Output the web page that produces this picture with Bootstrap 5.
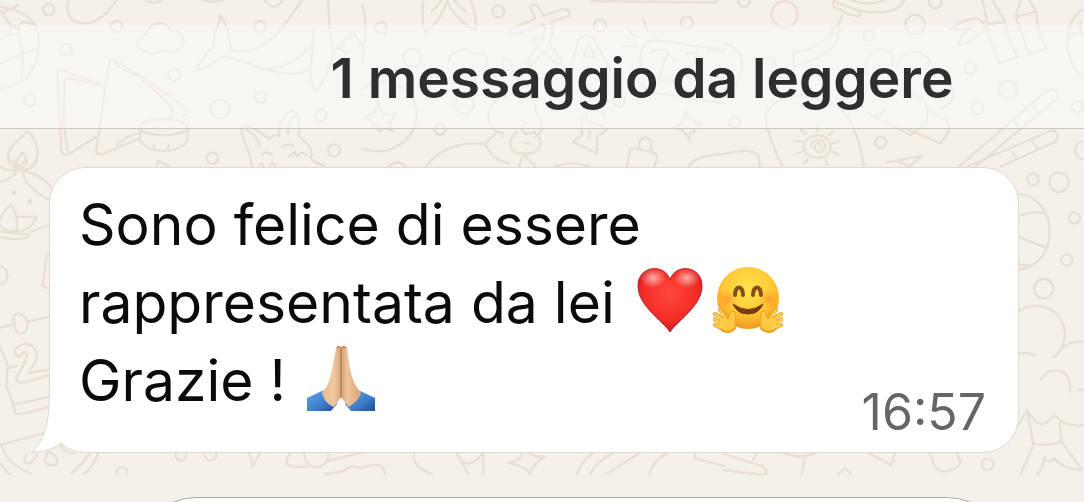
<!DOCTYPE html>
<html lang="it">
<head>
<meta charset="utf-8">
<meta name="viewport" content="width=device-width, initial-scale=1">
<title>Chat</title>
<link href="https://cdn.jsdelivr.net/npm/bootstrap@5.3.0/dist/css/bootstrap.min.css" rel="stylesheet">
<style>
  body { background: #f4f1ea; font-family: Inter, "Liberation Sans", sans-serif; color: #0b0b0b; }
  .chat { padding-top: 25px; }
  .wallpaper { position: absolute; top: 0; left: 0; z-index: 0; width: 100%; fill: none; stroke: #eadfd4; stroke-width: 7; stroke-linecap: round; stroke-linejoin: round; }
  .unread { background: rgba(252, 252, 251, .5); border-bottom: 1px solid #cbc7c1; padding: 3px 0 0 200px; font-size: 55px; line-height: 100px; font-weight: 600; color: #2f2e2c; }
  .bubble { background: #fff; border: 1px solid #dedad3; border-radius: 36px; margin: 38px 65px 44px 49px; padding: 18px 32px 16px 29px; }
  .message { font-size: 57px; line-height: 78px; margin: 0 0 16px; }
  .sent-at { font-size: 50px; line-height: 48px; color: #666; }
  .tail { position: absolute; left: -19px; bottom: -1px; }
  .emoji { width: 70px; height: 70px; vertical-align: -13px; margin: 0 4px; }
  .next-bubble { background: #fff; border: 1px solid #a9a9a7; border-radius: 60px; height: 120px; margin: 0 77px 0 136px; }
</style>
</head>
<body>
<main class="chat position-relative vh-100 overflow-hidden">
  <svg class="wallpaper" viewBox="0 0 1084 475" aria-hidden="true">
    <g transform="scale(.3333)">
      <circle cx="146" cy="29" r="17"/><circle cx="350" cy="80" r="17"/><circle cx="199" cy="148" r="17"/><circle cx="89" cy="301" r="17"/><circle cx="522" cy="224" r="18"/><circle cx="780" cy="80" r="17"/><circle cx="660" cy="327" r="29"/><circle cx="782" cy="292" r="17"/><circle cx="963" cy="346" r="17"/><circle cx="637" cy="475" r="17"/><circle cx="1002" cy="451" r="18"/>
      <path d="M205 0C195 45 215 70 255 70S325 35 350 0M440 0Q462 18 485 0M605 0Q637 10 670 0M795 0Q820 40 848 0"/>
      <path d="M0 20Q60 30 88 55Q118 85 117 130C117 210 70 262 0 265M15 35L55 15M0 30L35 80L50 85L70 65L108 75M28 90a14 14 0 1 0 28 0a14 14 0 1 0-28 0M55 105Q75 160 65 235M0 190L110 145M0 120Q20 100 28 104"/>
      <path d="M440 158C400 150 408 105 443 100C447 62 500 60 514 92C555 92 565 140 530 150C515 160 500 155 490 150C472 162 455 162 440 158Z"/>
      <path d="M905 0C860 70 800 170 700 152C680 145 700 95 660 46C660 85 630 110 643 142C610 155 612 185 586 206C625 215 640 180 672 170C740 180 780 215 870 222Q905 222 930 208M780 208C860 210 910 165 937 132M940 93C945 160 920 200 937 255Q948 285 962 255C985 215 1000 180 1000 155L1055 100M985 0Q985 70 997 140M1060 100L1086 135M1000 150Q1030 140 1040 165"/>
      <path d="M172 211L184 450Q188 470 205 463L290 410M172 211Q180 206 195 213L310 257L195 233L190 370L204 455M288 455L328 185Q333 172 350 182L435 238L555 320Q570 338 550 348M288 455Q293 466 308 462L420 415M345 190Q370 212 420 232L515 320Q525 335 510 350M350 435Q380 405 420 400"/>
      <path d="M420 380C420 350 563 350 563 380C563 415 420 415 420 380V415C430 465 550 465 563 415V380M462 435V449M505 435V449"/>
      <path d="M83 392C65 420 20 435 25 475Q30 505 70 510C125 505 125 435 83 392ZM66 458C55 475 45 480 50 495Q62 512 78 495Q85 475 66 458Z"/>
      <path d="M755 500C755 450 720 420 725 383Q730 375 760 387Q790 400 805 418Q825 400 838 408C835 370 860 330 880 333C905 345 895 380 897 410Q935 435 935 465Q920 480 975 498M740 390Q775 410 778 435M865 402Q860 370 883 350M785 465Q800 450 815 463M850 440Q865 430 880 437M868 470L885 455L890 470L905 458L920 465M775 495L785 490L790 500M810 495L820 488L827 500M470 500L475 482L505 498"/>
    </g>
    <g transform="translate(362) scale(.3333)">
      <circle cx="409" cy="34" r="18"/><circle cx="57" cy="84" r="18"/><circle cx="714" cy="77" r="18"/><circle cx="975" cy="68" r="18"/><circle cx="234" cy="388" r="17"/><circle cx="308" cy="313" r="28"/><circle cx="772" cy="302" r="17"/><circle cx="151" cy="173" r="27"/><circle cx="436" cy="195" r="15"/>
      <path d="M185 0Q175 50 190 98Q240 60 255 0Q270 50 340 92Q345 40 325 0M210 35L240 0M275 0L310 35M0 15Q20 55 0 190M688 3L1060 8L1065 0"/>
      <path d="M445 88L520 55L505 25Q505 10 525 15L545 47L605 27Q630 30 620 48L570 65Q575 100 560 130L595 175Q605 200 580 190L545 155L510 195Q490 200 500 175L525 140L510 120Q520 105 540 122Q550 95 545 73L455 104Q435 105 445 88Z"/>
      <path d="M630 190L650 120Q670 95 695 115L745 210M665 170L680 130L700 170ZM785 138L825 140M800 90L825 113M845 60L855 92M835 185Q835 120 880 120L1086 150M870 155Q900 140 920 160L905 190L890 240H950M975 160Q1015 150 1000 185Q1030 210 980 230M1035 155H1086M840 175L825 240L860 275L1086 310M935 180V182M935 215V217"/>
      <path d="M0 270C60 210 165 265 165 345C165 420 80 475 0 445M48 305L64 342L105 345L80 370L92 393L62 382Q55 405 45 380L10 350L38 340Z"/>
      <path d="M260 185C265 150 320 140 330 160C370 155 385 175 370 200M190 500C250 430 320 425 370 433L405 395C360 370 380 290 435 290C470 270 525 290 520 335C540 355 550 395 520 410M370 433Q390 480 440 490M405 395Q430 400 420 410M465 395C435 420 440 465 485 460C540 465 550 420 515 395C480 420 465 370 495 370M485 430L510 432M480 460L520 498M470 500L480 475M580 500Q630 480 680 500M80 500Q105 475 130 500"/>
      <path d="M660 355L738 387L705 410V460L632 425L660 405ZM685 395L680 412M672 350Q675 330 700 330Q735 335 728 365M1000 395Q975 400 985 425Q970 385 932 382Q975 370 972 335Q990 370 1020 370Q990 385 1000 395M795 500L805 448Q810 440 880 460Q890 465 878 500M832 440V425Q850 400 868 425V450M980 500Q1000 465 1086 462"/>
    </g>
    <g transform="translate(724) scale(.3333)">
      <circle cx="60" cy="3" r="17"/><circle cx="182" cy="43" r="39"/><circle cx="634" cy="7" r="18"/><circle cx="573" cy="73" r="29"/><circle cx="434" cy="106" r="16"/><circle cx="739" cy="205" r="17"/><circle cx="852" cy="270" r="27"/><circle cx="761" cy="325" r="17"/><circle cx="1060" cy="320" r="17"/><circle cx="33" cy="367" r="17"/><circle cx="470" cy="427" r="17"/><circle cx="1080" cy="451" r="27"/><circle cx="337" cy="89" r="12"/>
      <path d="M330 0Q320 25 350 28Q380 50 405 48L412 33Q520 50 540 0M330 5L412 35M380 0Q430 20 485 0M355 48L340 80M325 98Q280 150 208 157L210 200L260 185Q340 150 345 100M0 130Q70 150 50 220Q30 270 0 280M110 180Q150 160 155 195"/>
      <path d="M775 0L790 70Q790 105 825 188L882 172Q850 120 843 65L805 0M790 73L843 65M890 0L875 48L915 162L970 145Q935 90 938 35L915 0M877 50L938 35M780 70Q750 35 680 87Q720 95 750 80Q710 100 703 135Q760 125 785 78"/>
      <path d="M1084 25C1010 55 1015 200 1084 235M1035 110L1070 95L1084 110M1070 95V65M430 220C410 165 460 135 495 155Q510 165 505 195M520 200C530 140 610 145 620 190M430 340L560 405L605 370Q620 320 590 290L540 280M430 340Q450 355 480 335M605 325L665 360Q690 385 650 430L545 385M620 260Q665 230 685 265Q700 310 650 325"/>
      <path d="M175 500Q120 380 125 345C150 285 220 275 300 300C380 320 410 430 420 500M240 440C240 395 320 395 320 440C315 490 240 480 240 440M262 440C265 410 305 415 303 440C295 470 265 455 275 435Q290 420 290 440M280 375V393M230 390L245 403M213 422L233 425M215 462L235 455M240 490L250 480M325 395L313 407M325 430L345 425M325 455L343 465M305 480L310 495M0 462Q100 440 105 475L108 500M490 487L595 467L555 500L520 482"/>
      <path d="M705 500L970 270Q1005 260 1000 295L755 500M730 500L985 390Q1010 400 995 425L830 500M925 315L942 335M925 425L940 445M870 360L885 380M865 455L878 475"/>
    </g>
    <g transform="translate(0 160) scale(.3333)">
      <path d="M0 20Q20 35 50 30Q90 40 108 0M40 0L50 28L75 0M60 30Q130 45 155 85M70 40Q75 80 148 120M0 65Q30 60 50 35M0 180Q10 150 35 135Q55 170 50 213Q15 220 0 195M55 170L110 170Q90 215 50 213M0 215L90 225Q80 245 0 232M95 215L148 195M0 320Q25 325 22 350Q20 370 0 375M148 280Q135 285 135 330L128 375Q130 385 150 382M0 503L38 493M83 485L148 470M40 475C45 450 75 460 83 490C80 530 50 525 45 505ZM0 560L25 620M22 625L20 680L40 735L45 760Q55 768 148 740M40 735L148 710M48 585C35 560 75 540 100 560C130 595 90 625 85 640L145 628M48 585Q60 595 72 575C95 580 65 625 50 650Q45 670 70 668L148 645M25 625L50 618M0 855L130 820M5 855Q20 910 90 940M0 910L30 945M80 885Q65 905 85 912Q105 905 110 880M145 875C120 910 150 920 165 915C185 905 160 880 145 875M180 850Q195 885 225 880M270 880Q240 920 215 940M295 880Q275 930 250 942"/>
      <circle cx="42" cy="98" r="4" fill="#eadfd4"/><circle cx="90" cy="125" r="4" fill="#eadfd4"/>
    </g>
    <g transform="translate(974 130) scale(.3333)">
      <circle cx="177" cy="148" r="17"/><circle cx="255" cy="157" r="29"/><circle cx="301" cy="264" r="17"/><circle cx="278" cy="390" r="17"/><circle cx="209" cy="476" r="29"/><circle cx="41" cy="1003" r="17"/>
      <path d="M130 192C260 200 260 410 130 420M130 262Q170 240 210 250M130 320L215 352M130 400Q145 410 165 405M130 545C200 500 280 550 272 620Q268 665 237 682M265 655Q290 630 330 635M130 673Q160 665 183 676M201 750C220 705 300 710 287 788M315 780H330M140 1033L178 945L160 840L133 885M160 840Q200 915 242 855Q275 895 330 885M258 880L262 935Q220 950 182 942M262 935L325 1020Q270 1020 240 985Q220 1005 210 980Q210 1010 190 1033"/>
    </g>
    <g transform="translate(0 400) scale(.3333)">
      <path d="M525 155C525 190 560 190 560 155M613 155C613 190 650 190 650 155M747 155L758 198L782 155M875 155Q845 190 875 200H920M915 155C905 215 985 215 985 165M985 183L1086 158M975 222L1030 215Q1050 190 1086 205M352 222C340 200 385 190 382 220"/>
      <path d="M1086 203Q1150 180 1155 222M1243 158Q1230 195 1295 222M1370 158L1405 222M1370 160Q1400 220 1450 160V222M1565 158Q1570 180 1525 190Q1580 198 1590 222Q1605 185 1635 170Q1595 170 1585 158M1730 222Q1745 185 1780 158M1770 222Q1790 185 1840 158M1820 222L1920 158M1948 222Q1960 180 2005 158M2085 158V175L2172 198"/>
      <path d="M2172 162L2290 200Q2305 215 2295 225L2172 210M2270 160L2260 180M2350 158Q2400 180 2450 158M2415 170L2405 222M2515 222L2535 205L2555 225M2605 158L2675 195L2685 158M2790 158L2805 200Q2820 225 2865 205Q2885 195 2880 180L2870 158"/>
    </g>
  </svg>

  <header class="unread position-relative text-center text-nowrap">1 messaggio da leggere</header>

  <article class="bubble position-relative d-flex justify-content-between">
    <svg class="tail" width="60" height="54" viewBox="0 0 60 54" aria-hidden="true">
      <path d="M18 0C18 28 12 42 1 53C14 53 22 50 31 44L44 30L30 0Z" fill="#fff"/>
      <path d="M18 0C18 28 12 42 1 53C14 53 22 50 31 44" fill="none" stroke="#dedad3"/>
    </svg>
    <p class="message position-relative text-nowrap">Sono felice di essere<br>
      rappresentata da lei
      <svg class="emoji" viewBox="0 0 70 70" role="img" aria-label="Cuore rosso">
        <defs>
          <radialGradient id="heart" cx=".5" cy=".4" r=".65"><stop stop-color="#ff493b"/><stop offset=".65" stop-color="#f22c25"/><stop offset="1" stop-color="#b91420"/></radialGradient>
          <radialGradient id="shine"><stop stop-color="#fff" stop-opacity=".6"/><stop offset="1" stop-color="#fff" stop-opacity="0"/></radialGradient>
        </defs>
        <path d="M35 66C28 55 3 40 3 20C3 -1 30 -3 35 14C40 -3 67 -1 67 20C67 40 42 55 35 66Z" fill="url(#heart)" stroke="#c41d23"/>
        <ellipse cx="18" cy="12" rx="13" ry="10" fill="url(#shine)"/><ellipse cx="52" cy="12" rx="13" ry="10" fill="url(#shine)"/>
      </svg><svg class="emoji" viewBox="0 0 70 70" role="img" aria-label="Faccina che abbraccia">
        <defs>
          <radialGradient id="face" cx=".5" cy=".35" r=".65"><stop stop-color="#ffe34f"/><stop offset=".6" stop-color="#ffc936"/><stop offset="1" stop-color="#f09a20"/></radialGradient>
          <radialGradient id="cheek"><stop stop-color="#ff7a2a" stop-opacity=".5"/><stop offset="1" stop-color="#ff7a2a" stop-opacity="0"/></radialGradient>
          <g id="hand"><path d="M21 62C16 67 10 65 8 62L2 59M9 57L1 53M11 53L2 48M14 51L7 44" fill="none" stroke="#efa52e" stroke-width="4" stroke-linecap="round"/><path d="M8 50C12 54 16 54 17 49C18 44 22 44 22 49C24 57 22 65 15 65C9 65 7 61 5 58Z" fill="#ffc940" stroke="#e89b27" stroke-width=".8"/><path d="M10 62L2 59M10 58L1 53M12 55L2 48M13 53L7 44" stroke="#ffd252" stroke-width="2" stroke-linecap="round"/></g>
        </defs>
        <circle cx="35" cy="32" r="31" fill="url(#face)"/>
        <circle cx="14" cy="33" r="10" fill="url(#cheek)"/><circle cx="56" cy="33" r="10" fill="url(#cheek)"/>
        <path d="M22 29C22 19 30 19 30 29M40 29C40 19 48 19 48 29" fill="none" stroke="#82511b" stroke-width="4" stroke-linecap="round"/>
        <path d="M20 38Q35 49 50 38Q46 48 35 48T20 38Z" fill="#743d12" stroke="#743d12" stroke-linejoin="round"/>
        <use href="#hand"/><use href="#hand" transform="translate(70) scale(-1 1)"/>
      </svg><br>
      Grazie !
      <svg class="emoji" viewBox="0 0 70 70" role="img" aria-label="Mani giunte">
        <defs>
          <linearGradient id="skin"><stop stop-color="#e8bc91"/><stop offset=".3" stop-color="#f0c9a0"/><stop offset=".5" stop-color="#d6a277"/><stop offset=".65" stop-color="#efc59b"/><stop offset="1" stop-color="#daa374"/></linearGradient>
          <linearGradient id="sleeve" x2="1" y2="1"><stop stop-color="#62a4e9"/><stop offset=".6" stop-color="#3b7dca"/><stop offset="1" stop-color="#1c4f92"/></linearGradient>
        </defs>
        <path d="M1 54L18 46L31 60L25 67H1Z" fill="url(#sleeve)"/><path d="M69 54L52 46L39 60L45 67H69Z" fill="url(#sleeve)"/>
        <path d="M30 4Q31 0 35 3Q39 0 41 4L44 25C46 34 49 42 55 49C53 56 47 60 43 63L35 53L28 63C22 61 17 55 16 48C23 42 24 34 26 26Z" fill="url(#skin)"/>
        <path d="M35 4V54M31 4Q33 1 34 4M36 4Q38 1 40 4" fill="none" stroke="#a96c43" stroke-width="1"/>
      </svg>
    </p>
    <time class="sent-at position-relative align-self-end" datetime="16:57">16:57</time>
  </article>

  <article class="next-bubble position-relative" aria-label="Messaggio successivo"></article>
</main>
<script src="https://cdn.jsdelivr.net/npm/bootstrap@5.3.0/dist/js/bootstrap.bundle.min.js"></script>
</body>
</html>
